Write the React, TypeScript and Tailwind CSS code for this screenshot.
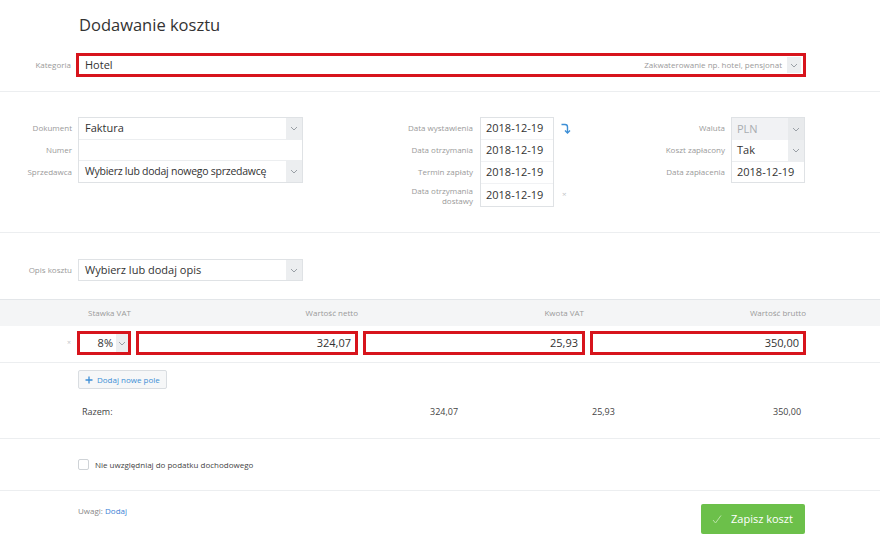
import React from "react";

const Chevron = () => (
  <svg width="8" height="5" viewBox="0 0 8 5" fill="none">
    <path d="M1 1 L4 4 L7 1" stroke="#9aa0a6" strokeWidth="1" />
  </svg>
);

const Arrow = () => (
  <div className="flex h-[16px] w-[14px] items-center justify-center bg-[#eceef0]">
    <Chevron />
  </div>
);

export default function App() {
  const font = { fontFamily: '"Open Sans", "Noto Sans", sans-serif' };
  return (
    <div className="h-[540px] w-[880px] overflow-hidden bg-white text-[#333]" style={font}>
      {/* Title */}
      <div className="h-[53px] pl-[79px] pt-[12px] text-[16.5px] leading-[26px] text-[#333]">Dodawanie kosztu</div>

      {/* Kategoria */}
      <div className="flex h-[24px] items-center">
        <div className="w-[76px] shrink-0 pr-[5px] text-right text-[8px] text-[#9a9a9a]">Kategoria</div>
        <div className="flex h-[24px] w-[730px] items-center border-[3px] border-[#d7141c] pl-[6px] pr-[2px]">
          <span className="flex-1 text-[11px] text-[#333]">Hotel</span>
          <span className="mr-[5px] text-[8px] text-[#9a9a9a]">Zakwaterowanie np. hotel, pensjonat</span>
          <Arrow />
        </div>
      </div>
      <div className="h-[15px] border-b border-[#eceef0]" />

      {/* Document section */}
      <div className="flex h-[141px] border-b border-[#eceef0] pt-[25px]">
        {/* Left group */}
        <div className="flex w-[303px] shrink-0 items-start">
          <div className="w-[78px] shrink-0 pr-[6px]">
            <div className="flex h-[22px] items-center justify-end text-[8px] text-[#9a9a9a]">Dokument</div>
            <div className="flex h-[22px] items-center justify-end text-[8px] text-[#9a9a9a]">Numer</div>
            <div className="flex h-[22px] items-center justify-end text-[8px] text-[#9a9a9a]">Sprzedawca</div>
          </div>
          <div className="w-[225px] border border-[#dfe2e5]">
            <div className="flex h-[22px] items-center border-b border-[#eceef0]">
              <span className="flex-1 pl-[6px] text-[11px]">Faktura</span>
              <div className="flex h-full w-[16px] items-center justify-center bg-[#eceef0]"><Chevron /></div>
            </div>
            <div className="h-[21px] border-b border-[#eceef0]" />
            <div className="flex h-[21px] items-center">
              <span className="flex-1 overflow-hidden whitespace-nowrap pl-[6px] text-[10.5px] tracking-[-0.25px]">Wybierz lub dodaj nowego sprzedawcę</span>
              <div className="flex h-full w-[16px] shrink-0 items-center justify-center bg-[#eceef0]"><Chevron /></div>
            </div>
          </div>
        </div>

        {/* Middle group */}
        <div className="ml-[50px] flex items-start">
          <div className="w-[127px] shrink-0 pr-[7px]">
            <div className="flex h-[22px] items-center justify-end text-[8px] text-[#9a9a9a]">Data wystawienia</div>
            <div className="flex h-[22px] items-center justify-end text-[8px] text-[#9a9a9a]">Data otrzymania</div>
            <div className="flex h-[22px] items-center justify-end text-[8px] text-[#9a9a9a]">Termin zapłaty</div>
            <div className="flex h-[22px] flex-col items-end justify-center pt-[3px] text-[8px] leading-[10px] text-[#9a9a9a]">
              <span>Data otrzymania</span>
              <span>dostawy</span>
            </div>
          </div>
          <div className="w-[74px] border border-[#dfe2e5]">
            {["2018-12-19", "2018-12-19", "2018-12-19", "2018-12-19"].map((d, i) => (
              <div
                key={i}
                className={`flex h-[22px] items-center pl-[5px] text-[11px] ${i < 3 ? "border-b border-[#f1f2f4]" : ""}`}
              >
                {d}
              </div>
            ))}
          </div>
          <div className="w-[22px] pl-[6px]">
            <div className="flex h-[22px] items-center">
              <svg width="12" height="13" viewBox="0 0 12 13" fill="none">
                <path d="M1.5 2.5 H5 Q7.5 2.5 7.5 5 V10.5" stroke="#3d8fd6" strokeWidth="1.4" />
                <path d="M5 8.5 L7.5 11 L10 8.5" stroke="#3d8fd6" strokeWidth="1.4" />
              </svg>
            </div>
            <div className="h-[22px]" />
            <div className="h-[22px]" />
            <div className="flex h-[22px] items-center pl-[2px] text-[8px] text-[#c2c5c8]">×</div>
          </div>
        </div>

        {/* Right group */}
        <div className="flex items-start">
          <div className="w-[155px] shrink-0 pr-[6px]">
            <div className="flex h-[22px] items-center justify-end text-[8px] text-[#9a9a9a]">Waluta</div>
            <div className="flex h-[22px] items-center justify-end text-[8px] text-[#9a9a9a]">Koszt zapłacony</div>
            <div className="flex h-[22px] items-center justify-end text-[8px] text-[#9a9a9a]">Data zapłacenia</div>
          </div>
          <div className="w-[74px] border border-[#dfe2e5]">
            <div className="flex h-[22px] items-center bg-[#f1f2f4]">
              <span className="flex-1 pl-[5px] text-[11px] text-[#a9adb1]">PLN</span>
              <div className="flex h-full w-[16px] items-center justify-center bg-[#e8eaec]"><Chevron /></div>
            </div>
            <div className="flex h-[21px] items-center">
              <span className="flex-1 pl-[5px] text-[11px]">Tak</span>
              <div className="flex h-full w-[16px] items-center justify-center bg-[#eceef0]"><Chevron /></div>
            </div>
            <div className="flex h-[21px] items-center border-t border-[#eceef0] pl-[5px] text-[11px]">2018-12-19</div>
          </div>
        </div>
      </div>

      {/* Opis kosztu */}
      <div className="flex h-[66px] items-start pt-[26px]">
        <div className="w-[78px] shrink-0 pr-[6px]">
          <div className="flex h-[22px] items-center justify-end text-[8px] text-[#9a9a9a]">Opis kosztu</div>
        </div>
        <div className="flex h-[22px] w-[225px] items-center border border-[#dfe2e5]">
          <span className="flex-1 pl-[6px] text-[11px]">Wybierz lub dodaj opis</span>
          <div className="flex h-full w-[16px] items-center justify-center bg-[#eceef0]"><Chevron /></div>
        </div>
      </div>

      {/* Table header */}
      <div className="flex h-[27px] items-center border-t border-[#e3e6e9] bg-[#f4f5f6] text-[8px] text-[#9a9a9a]">
        <div className="w-[88px] shrink-0" />
        <div className="w-[44px] shrink-0">Stawka VAT</div>
        <div className="w-[226px] shrink-0 text-right">Wartość netto</div>
        <div className="w-[226px] shrink-0 text-right">Kwota VAT</div>
        <div className="w-[222px] shrink-0 text-right">Wartość brutto</div>
      </div>

      {/* Table row */}
      <div className="flex h-[37px] items-start border-b border-[#eceef0] pt-[5px]">
        <div className="flex h-[24px] w-[77px] shrink-0 items-center justify-end pr-[6px] text-[7px] text-[#c2c5c8]">×</div>
        <div className="flex h-[24px] w-[54px] shrink-0 items-center border-[3px] border-[#d7141c]">
          <span className="flex-1 pr-[3px] text-right text-[11px]">8%</span>
          <div className="flex h-full w-[12px] items-center justify-center bg-[#eceef0]"><Chevron /></div>
        </div>
        <div className="ml-[5px] flex h-[24px] w-[222px] shrink-0 items-center justify-end border-[3px] border-[#d7141c] pr-[4px] text-[11px]">324,07</div>
        <div className="ml-[5px] flex h-[24px] w-[222px] shrink-0 items-center justify-end border-[3px] border-[#d7141c] pr-[4px] text-[11px]">25,93</div>
        <div className="ml-[5px] flex h-[24px] w-[216px] shrink-0 items-center justify-end border-[3px] border-[#d7141c] pr-[4px] text-[11px]">350,00</div>
      </div>

      {/* Add button */}
      <div className="pl-[78px] pt-[7px]">
        <div className="flex h-[19px] w-[89px] items-center gap-[4px] rounded-[2px] border border-[#d9dde1] bg-[#f6f7f8] pl-[6px] text-[8px] text-[#3d8fd6]">
          <svg width="8" height="8" viewBox="0 0 8 8">
            <path d="M4 0.5 V7.5 M0.5 4 H7.5" stroke="#3d8fd6" strokeWidth="1.3" />
          </svg>
          <span>Dodaj nowe pole</span>
        </div>
      </div>

      {/* Razem */}
      <div className="flex h-[50px] items-start border-b border-[#eceef0] pt-[16px] text-[9px] text-[#444]">
        <div className="w-[430px] shrink-0 pl-[82px]">Razem:</div>
        <div className="w-[162px] shrink-0">324,07</div>
        <div className="w-[181px] shrink-0">25,93</div>
        <div>350,00</div>
      </div>

      {/* Checkbox */}
      <div className="flex h-[52px] items-center border-b border-[#eceef0] pl-[78px]">
        <div className="h-[11px] w-[11px] rounded-[2px] border border-[#cfd3d7] bg-white" />
        <span className="ml-[6px] text-[8px] text-[#444]">Nie uwzględniaj do podatku dochodowego</span>
      </div>

      {/* Footer */}
      <div className="flex items-start pt-[13px]">
        <div className="w-[701px] shrink-0 pl-[78px] pt-[1px] text-[8px] text-[#888]">
          Uwagi: <span className="text-[#3d7fd6]">Dodaj</span>
        </div>
        <div className="flex h-[30px] w-[104px] items-center gap-[9px] rounded-[2px] bg-[#6cc04a] pl-[11px] text-[11px] text-white">
          <svg width="10" height="9" viewBox="0 0 10 9" fill="none">
            <path d="M1 5 L3.5 8 L9 0.5" stroke="#b9e3a6" strokeWidth="1" />
          </svg>
          <span>Zapisz koszt</span>
        </div>
      </div>
    </div>
  );
}
